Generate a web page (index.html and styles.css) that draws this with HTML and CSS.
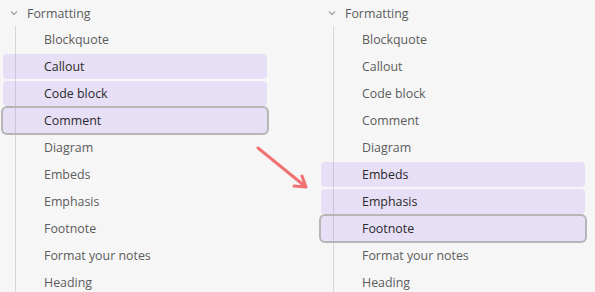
FILE: index.html
```html
<!DOCTYPE html>
<html lang="en">
<head>
    <meta charset="UTF-8">
    <meta name="viewport" content="width=device-width, initial-scale=1.0">
    <title>Formatting outline</title>
    <link rel="stylesheet" href="styles.css">
</head>
<body>
    <div class="compare">
        <!-- Before: top items selected -->
        <div class="tree">
            <div class="tree-header">
                <svg class="chevron" width="8" height="8" viewBox="0 0 8 8"><path d="M1 2.5 L4 5.5 L7 2.5"/></svg>
                <span>Formatting</span>
            </div>
            <div class="tree-children">
                <div class="tree-item">Blockquote</div>
                <div class="tree-item selected">Callout</div>
                <div class="tree-item selected">Code block</div>
                <div class="tree-item selected focused">Comment</div>
                <div class="tree-item">Diagram</div>
                <div class="tree-item">Embeds</div>
                <div class="tree-item">Emphasis</div>
                <div class="tree-item">Footnote</div>
                <div class="tree-item">Format your notes</div>
                <div class="tree-item">Heading</div>
            </div>
        </div>

        <!-- After: selection moved down -->
        <div class="tree">
            <div class="tree-header">
                <svg class="chevron" width="8" height="8" viewBox="0 0 8 8"><path d="M1 2.5 L4 5.5 L7 2.5"/></svg>
                <span>Formatting</span>
            </div>
            <div class="tree-children">
                <div class="tree-item">Blockquote</div>
                <div class="tree-item">Callout</div>
                <div class="tree-item">Code block</div>
                <div class="tree-item">Comment</div>
                <div class="tree-item">Diagram</div>
                <div class="tree-item selected">Embeds</div>
                <div class="tree-item selected">Emphasis</div>
                <div class="tree-item selected focused">Footnote</div>
                <div class="tree-item">Format your notes</div>
                <div class="tree-item">Heading</div>
            </div>
        </div>

        <svg class="arrow" width="65" height="55" viewBox="0 0 65 55">
            <path d="M8 8 L56 47 M52 36 L56 47 L44 46"/>
        </svg>
    </div>
</body>
</html>
```

FILE: styles.css
```css
body {
    margin: 0;
    background-color: #f6f6f6;
    font-family: "Segoe UI", "Open Sans", sans-serif;
    font-size: 12.4px;
    color: #5c5c5c;
}
.compare {
    position: relative;
    display: flex;
    height: 292px;
    overflow: hidden;
}
.tree {
    width: 318px;
    flex-shrink: 0;
}
.tree-header {
    display: flex;
    align-items: center;
    height: 26px;
    padding-left: 10px;
}
.chevron {
    margin-right: 9px;
}
.chevron path {
    fill: none;
    stroke: #a8a8a8;
    stroke-width: 1.4;
}
.tree-children {
    margin-left: 15px;
    padding-top: 1px;
    border-left: 1px solid #d6d6d6;
}
.tree-item {
    display: flex;
    align-items: center;
    width: 223px;
    height: 25px;
    margin: 0 0 2px -13px;
    padding-left: 41px;
    border-radius: 4px;
}
.tree-item.selected {
    background-color: rgba(138, 92, 245, 0.15);
    color: #2a2a2a;
}
.tree-item.focused {
    box-shadow: 0 0 0 2px #b6b6b6;
}
.arrow {
    position: absolute;
    left: 250px;
    top: 140px;
}
.arrow path {
    fill: none;
    stroke: #f07272;
    stroke-width: 3;
    stroke-linecap: round;
    stroke-linejoin: round;
}
```
